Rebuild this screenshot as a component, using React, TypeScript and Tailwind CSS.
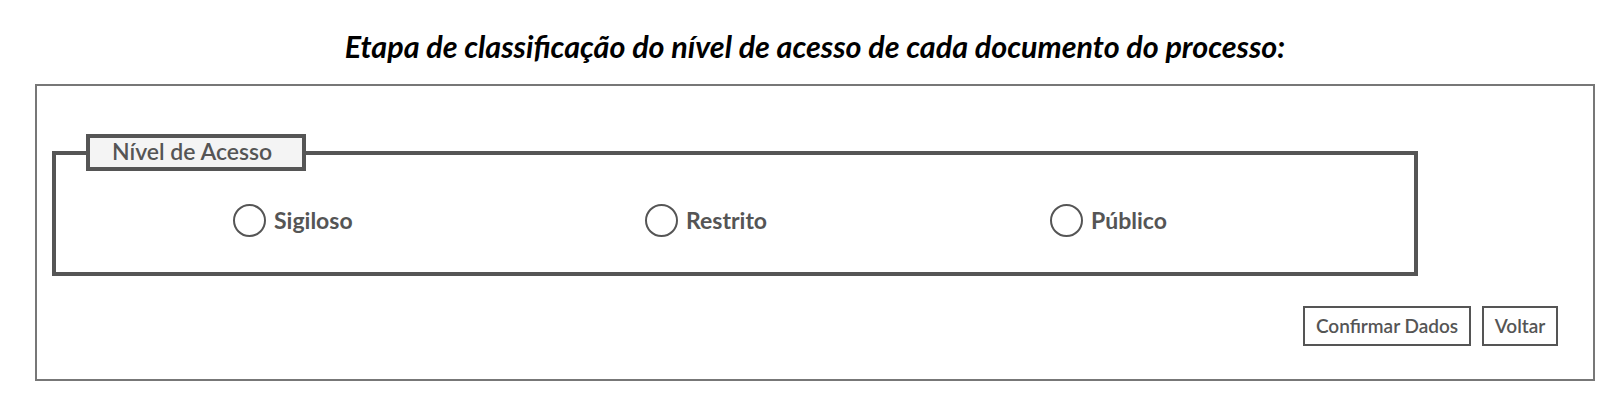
const OPTIONS = [
  { label: "Sigiloso", width: "w-[412px]" },
  { label: "Restrito", width: "w-[405px]" },
  { label: "Público", width: "w-[200px]" },
];

function Radio({ label, width }: { label: string; width: string }) {
  return (
    <label className={`flex items-center gap-[8px] ${width}`}>
      <span className="h-[33px] w-[33px] shrink-0 rounded-full border-2 border-[#555] bg-white" />
      <span className="text-[23px] font-bold text-[#555]">{label}</span>
    </label>
  );
}

export default function App() {
  return (
    <div className="h-[416px] w-[1615px] bg-white font-['Lato',sans-serif]">
      <h1 className="pl-[35px] pr-[20px] pt-[28px] text-center text-[30.5px] font-bold italic leading-[36px] text-black">
        Etapa de classificação do nível de acesso de cada documento do processo:
      </h1>
      <div className="ml-[35px] mr-[20px] mt-[20px] h-[297px] border-2 border-[#777]">
        <div className="relative ml-[15px] mr-[175px] mt-[65px] h-[125px] border-4 border-[#555]">
          <div className="absolute -top-[21px] left-[30px] flex h-[37px] w-[220px] items-center border-4 border-[#555] bg-[#f4f4f4] pb-[2px] pl-[22px] text-[23px] font-semibold text-[#555]">
            Nível de Acesso
          </div>
          <div className="flex pl-[177px] pt-[48px]">
            {OPTIONS.map((option) => (
              <Radio key={option.label} label={option.label} width={option.width} />
            ))}
          </div>
        </div>
        <div className="mr-[35px] mt-[30px] flex justify-end gap-[11px]">
          <button
            type="button"
            className="h-[40px] w-[168px] border-2 border-[#555] text-[19px] font-semibold text-[#555]"
          >
            Confirmar Dados
          </button>
          <button
            type="button"
            className="h-[40px] w-[76px] border-2 border-[#555] text-[19px] font-semibold text-[#555]"
          >
            Voltar
          </button>
        </div>
      </div>
    </div>
  );
}
